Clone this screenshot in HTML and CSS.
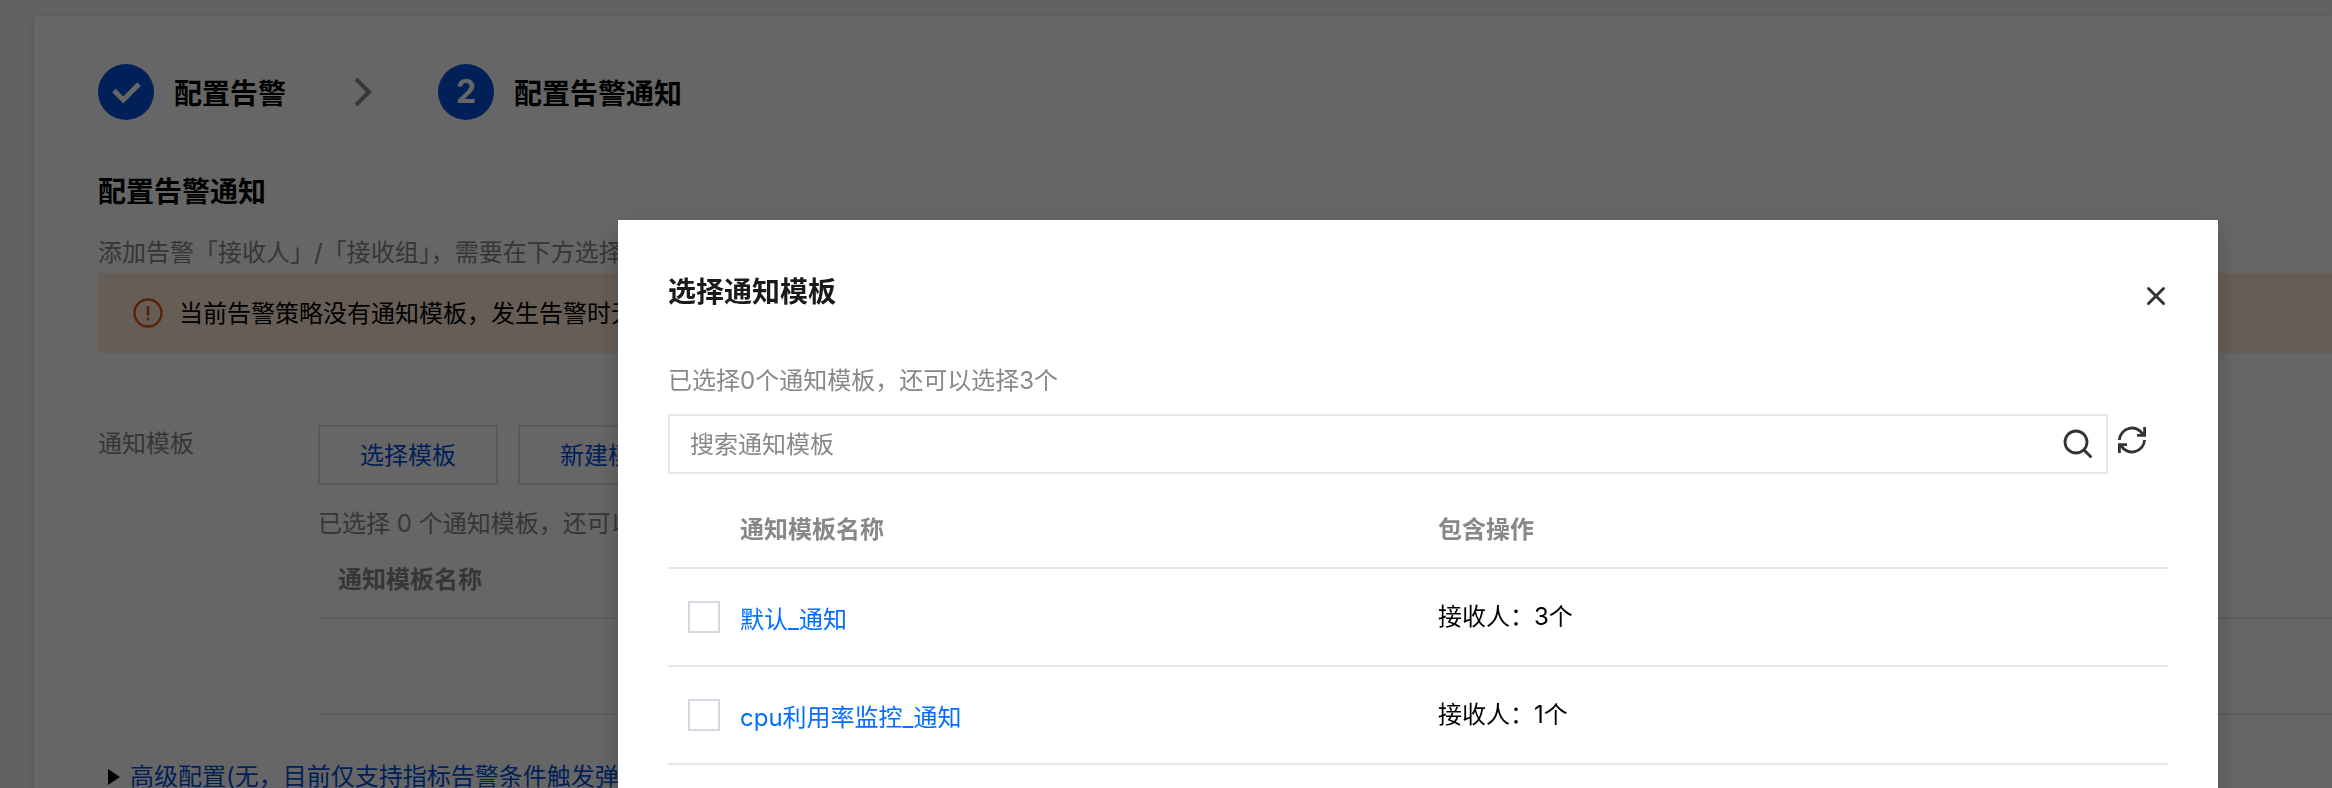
FILE: index.html
```html
<!DOCTYPE html>
<html lang="zh-CN">
<head>
<meta charset="utf-8">
<meta name="viewport" content="width=device-width, initial-scale=1">
<title>配置告警通知</title>
<link rel="stylesheet" href="styles.css">
</head>
<body>
<main class="card">
  <ol class="steps">
    <li class="step">
      <span class="step-num">
        <svg width="56" height="56" viewBox="0 0 56 56"><path d="M16 26.500l9.300 9.500L41 20" fill="none" stroke="#fff" stroke-width="5"/></svg>
      </span>
      <span class="step-label">配置告警</span>
    </li>
    <li class="step-arrow">
      <svg width="18" height="30" viewBox="0 0 18 30"><path d="M2 2l13 13L2 28" fill="none" stroke="#888" stroke-width="4"/></svg>
    </li>
    <li class="step">
      <span class="step-num">2</span>
      <span class="step-label">配置告警通知</span>
    </li>
  </ol>

  <h1 class="title">配置告警通知</h1>
  <p class="desc">添加告警「接收人」/「接收组」，需要在下方选择</p>
  <div class="alert">
    <svg width="30" height="30" viewBox="0 0 30 30"><circle cx="15" cy="15" r="13.500" fill="none" stroke="#e5541a" stroke-width="2.500"/><path d="M15 8v9.500M15 19.500v3" stroke="#e5541a" stroke-width="2.500"/></svg>
    <span>当前告警策略没有通知模板，发生告警时无</span>
  </div>

  <div class="field">
    <span class="label">通知模板</span>
    <div class="field-body">
      <div class="buttons">
        <button type="button" class="btn">选择模板</button>
        <button type="button" class="btn">新建模板</button>
      </div>
      <p class="count">已选择 0 个通知模板，还可以</p>
      <table class="table">
        <thead><tr><th>通知模板名称</th></tr></thead>
        <tbody><tr><td></td></tr></tbody>
      </table>
    </div>
  </div>

  <div class="advanced">
    <svg width="12" height="16" viewBox="0 0 12 16"><path d="M0 0l12 8-12 8z"/></svg>
    <a href="#">高级配置(无，目前仅支持指标告警条件触发弹</a>
  </div>
</main>

<div class="overlay">
  <div class="dialog" role="dialog" aria-labelledby="dialog-title">
    <div class="dialog-head">
      <h2 class="title" id="dialog-title">选择通知模板</h2>
      <button type="button" class="icon-btn close" aria-label="关闭">
        <svg width="20" height="20" viewBox="0 0 20 20"><path d="M2.500 2.500l15 15M17.500 2.500l-15 15" stroke="#333" stroke-width="3" stroke-linecap="round"/></svg>
      </button>
    </div>
    <p class="hint">已选择0个通知模板，还可以选择3个</p>
    <div class="search">
      <div class="search-box">
        <input type="text" class="search-input" placeholder="搜索通知模板" aria-label="搜索通知模板">
        <button type="button" class="icon-btn" aria-label="搜索">
          <svg width="30" height="30" viewBox="0 0 30 30"><circle cx="13" cy="13" r="11" fill="none" stroke="#333" stroke-width="2.800"/><path d="M21 21l6.500 6.500" stroke="#333" stroke-width="3" stroke-linecap="round"/></svg>
        </button>
      </div>
      <button type="button" class="icon-btn refresh" aria-label="刷新">
        <svg width="28" height="28" viewBox="0 0 28 28" fill="none" stroke="#333" stroke-width="2.800"><path d="M1.400 14A12.600 12.600 0 0 1 25 8.500M26.600 14A12.600 12.600 0 0 1 3 19.500M26.600 1v8.400H19M1.400 27v-8.400H9"/></svg>
      </button>
    </div>
    <table class="table picker">
      <thead>
        <tr><th class="col-check"></th><th class="col-name">通知模板名称</th><th>包含操作</th></tr>
      </thead>
      <tbody>
        <tr>
          <td class="col-check"><input type="checkbox" class="check" aria-label="默认_通知"></td>
          <td class="name"><a href="#">默认_通知</a></td>
          <td>接收人：3个</td>
        </tr>
        <tr>
          <td class="col-check"><input type="checkbox" class="check" aria-label="cpu利用率监控_通知"></td>
          <td class="name"><a href="#">cpu利用率监控_通知</a></td>
          <td>接收人：1个</td>
        </tr>
      </tbody>
    </table>
  </div>
</div>
</body>
</html>
```

FILE: styles.css
```css
* {
  box-sizing: border-box;
}
body {
  margin: 0;
  height: 100vh;
  overflow: hidden;
  padding: 16px 0 0 34px;
  background: #eff2f6;
  color: #000;
  font: 24px/36px Inter, "Noto Sans CJK SC", sans-serif;
}
h1, h2, p, ol {
  margin: 0;
  padding: 0;
}
button, input {
  font: inherit;
}
svg {
  display: block;
  flex: none;
}
a {
  color: #006eff;
  text-decoration: none;
}
.card {
  min-height: 100vh;
  padding: 48px 0 0 64px;
  background: #fff;
  box-shadow: 0 2px 6px rgba(54, 58, 80, 0.2);
}
.card a, .btn {
  color: #0052d9;
}

.steps {
  display: flex;
  align-items: center;
  list-style: none;
  font-size: 28px;
  font-weight: 700;
}
.step {
  display: flex;
  align-items: center;
  gap: 20px;
}
.step-num {
  display: flex;
  align-items: center;
  justify-content: center;
  width: 56px;
  height: 56px;
  border-radius: 50%;
  background: #0052d9;
  color: #fff;
  font-size: 32px;
}
.step-label {
  padding-top: 3px;
}
.step-arrow {
  margin: 0 66px 0 68px;
}

.title {
  font-size: 28px;
  line-height: 40px;
  font-weight: 700;
}
.card .title {
  margin-top: 52px;
}
.desc {
  margin-top: 23px;
  color: #888;
}
.alert {
  display: flex;
  align-items: center;
  gap: 16px;
  height: 80px;
  margin-top: 2px;
  padding-left: 35px;
  background: #ffe8d9;
}
.alert span {
  padding-top: 2px;
}

.field {
  display: flex;
  margin-top: 72px;
}
.label {
  width: 220px;
  padding-top: 1px;
  color: #888;
}
.field-body {
  flex: 1;
}
.buttons {
  display: flex;
  gap: 20px;
}
.btn {
  height: 60px;
  padding: 2px 40px 0;
  border: 2px solid #dcdfe8;
  background: #fff;
}
.count {
  margin-top: 21px;
  color: #888;
}
.table {
  width: 100%;
  border-collapse: collapse;
  text-align: left;
}
.table th {
  padding: 20px 20px 19px;
  border-bottom: 2px solid #e5e8ed;
  color: #888;
  font-weight: 700;
}
.table td {
  height: 96px;
  padding: 0 20px;
  border-bottom: 2px solid #e5e8ed;
}
.advanced {
  display: flex;
  align-items: center;
  gap: 10px;
  margin-top: 44px;
  padding-left: 10px;
}

.overlay {
  position: fixed;
  inset: 0;
  overflow: hidden;
  padding: 220px 114px 0 618px;
  background: rgba(0, 0, 0, 0.6);
}
.dialog {
  min-height: 100vh;
  padding: 52px 50px;
  background: #fff;
  box-shadow: 0 8px 24px rgba(0, 0, 0, 0.2);
}
.dialog .title {
  color: #1a1a1a;
}
.dialog-head {
  display: flex;
  align-items: center;
  justify-content: space-between;
}
.icon-btn {
  padding: 0;
  border: 0;
  background: none;
}
.close {
  margin: 8px 2px 0 0;
}
.hint {
  margin-top: 51px;
  color: #888;
}
.search {
  display: flex;
  align-items: flex-start;
  gap: 10px;
  margin-top: 15px;
}
.search-box {
  flex: 1;
  display: flex;
  align-items: center;
  height: 60px;
  padding: 0 13px 0 20px;
  border: 2px solid #e5e8ed;
}
.search-input {
  flex: 1;
  padding: 2px 0 0;
  border: 0;
  outline: 0;
}
.search-input::placeholder {
  color: #888;
}
.refresh {
  margin: 12px 22px 0 0;
}
.picker {
  margin-top: 18px;
  table-layout: fixed;
}
.picker td {
  height: 98px;
}
.picker .name {
  padding-top: 5px;
}
.picker th.col-check, .picker td.col-check {
  width: 52px;
  padding-right: 0;
}
.col-name {
  width: 698px;
}
.check {
  appearance: none;
  display: block;
  width: 32px;
  height: 32px;
  margin: 0;
  border: 2px solid #d5d9e2;
  background: #fff;
}
```
